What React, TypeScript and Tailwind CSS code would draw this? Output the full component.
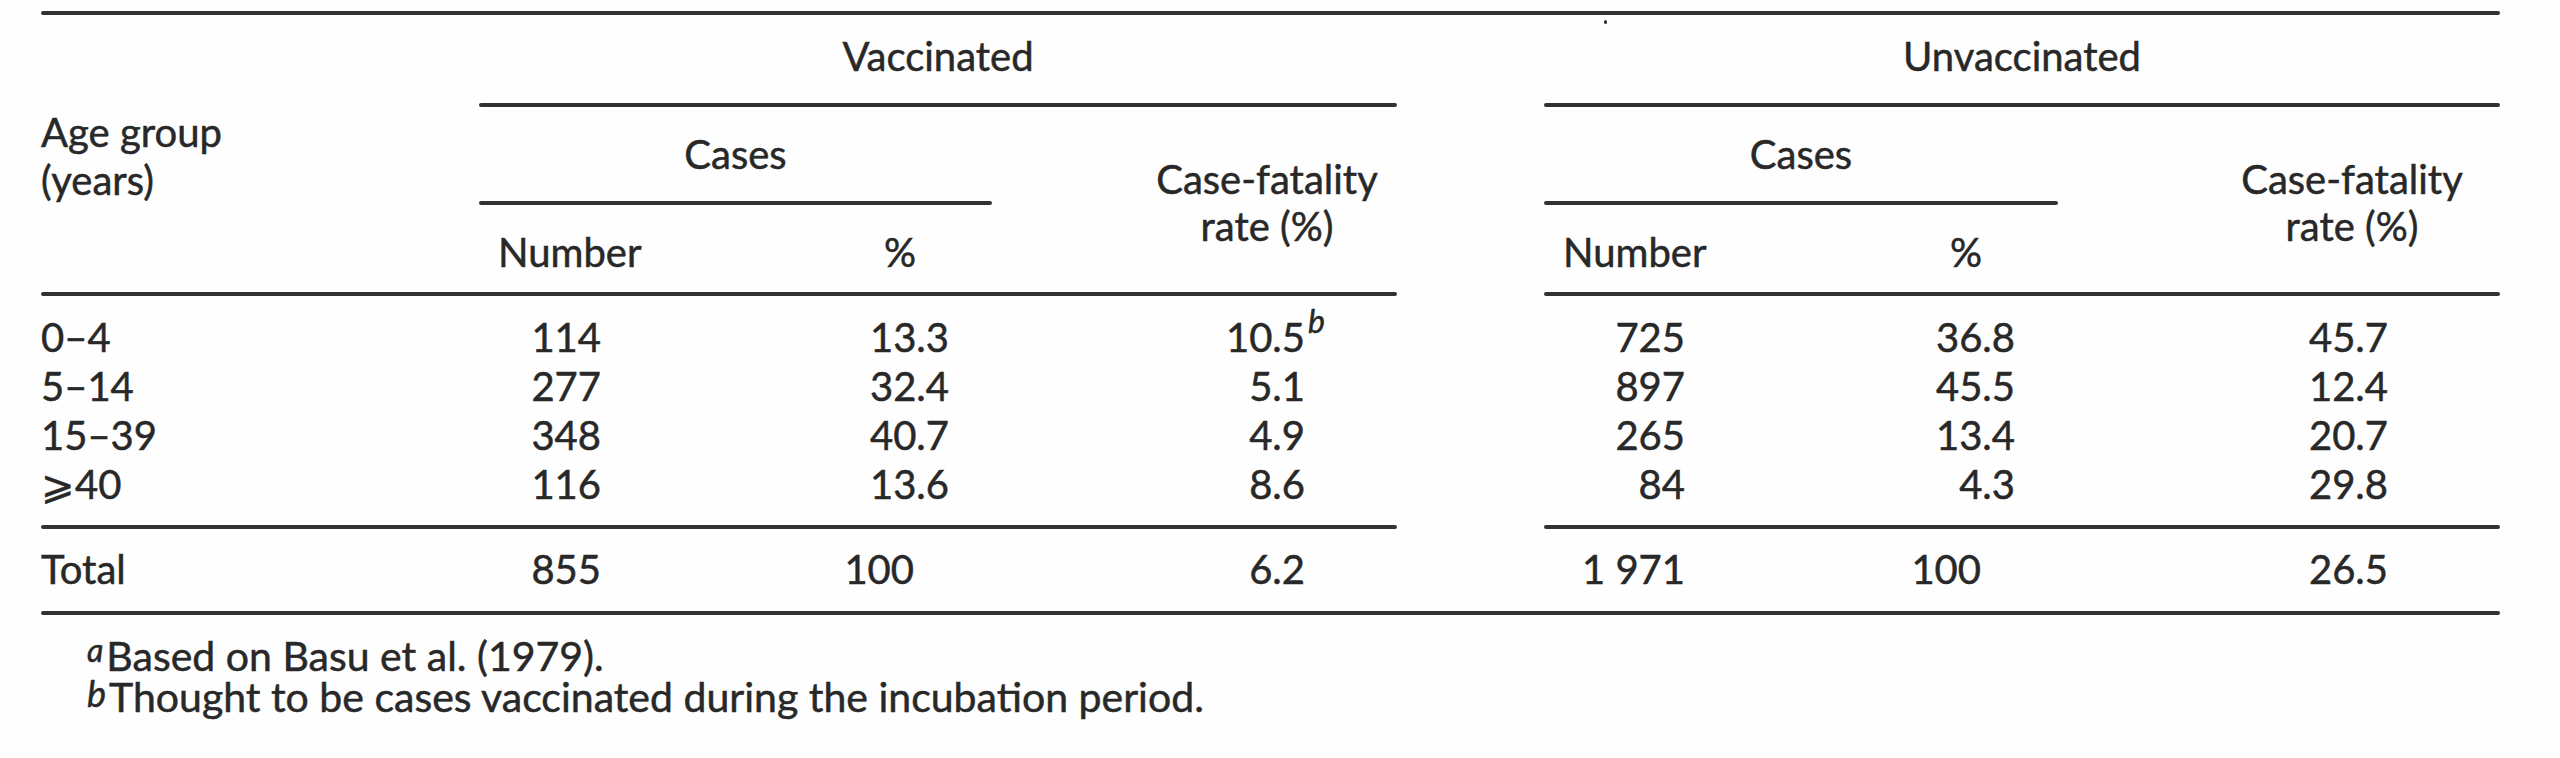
import React from 'react';

// Cases and case-fatality rates by age group, vaccinated vs unvaccinated
interface Row {
  age: string;
  vn: string;
  vp: string;
  vc: string;
  vcNote?: string;
  un: string;
  up: string;
  uc: string;
}

const ROWS: Row[] = [
  { age: '0–4', vn: '114', vp: '13.3', vc: '10.5', vcNote: 'b', un: '725', up: '36.8', uc: '45.7' },
  { age: '5–14', vn: '277', vp: '32.4', vc: '5.1', un: '897', up: '45.5', uc: '12.4' },
  { age: '15–39', vn: '348', vp: '40.7', vc: '4.9', un: '265', up: '13.4', uc: '20.7' },
  { age: '⩾40', vn: '116', vp: '13.6', vc: '8.6', un: '84', up: '4.3', uc: '29.8' },
];

const COLS = 'grid grid-cols-[438px_257px_256px_405px_147px_257px_257px_442px]';
const RULE = 'h-[4px] rounded-full bg-[#323232]';

const DataRow: React.FC<{ row: Row }> = ({ row }) => (
  <>
    <div className="col-start-1">{row.age}</div>
    <div className="col-start-2 text-right pr-[135px]">{row.vn}</div>
    <div className="col-start-3 text-right pr-[43px]">{row.vp}</div>
    <div className="col-start-4 text-right pr-[92px]">
      <span className="relative">
        {row.vc}
        {row.vcNote && (
          <span className="absolute left-full top-[-8px] pl-[3px] text-[32px] italic leading-none">{row.vcNote}</span>
        )}
      </span>
    </div>
    <div className="col-start-6 text-right pr-[116px]">{row.un}</div>
    <div className="col-start-7 text-right pr-[43px]">{row.up}</div>
    <div className="col-start-8 text-right pr-[112px]">{row.uc}</div>
  </>
);

export default function App() {
  return (
    <div className="relative w-[2560px] h-[758px] bg-[#fefefe] text-[#282828] font-['Lato','Open_Sans',sans-serif] text-[40px] [-webkit-text-stroke:0.5px_#282828] pl-[41px] pt-[11px]">
      {/* speck on the scan */}
      <span className="absolute left-[1604px] top-[20px] h-[4px] w-[3px] rounded-full bg-[#333]" />

      <div className="w-[2459px]">
        <div className={RULE} />

        {/* header */}
        <div className={`${COLS} grid-rows-[88px_4px_94px_4px_87px_4px]`}>
          <div className="col-start-1 row-start-1 row-span-5 pt-[93px] leading-[48px]">
            Age group
            <br />
            (years)
          </div>

          <div className="col-start-2 col-span-3 row-start-1 text-center pt-[17px] leading-[49px]">Vaccinated</div>
          <div className="col-start-6 col-span-3 row-start-1 text-center pt-[17px] leading-[49px]">Unvaccinated</div>

          <div className={`col-start-2 col-span-3 row-start-2 ${RULE}`} />
          <div className={`col-start-6 col-span-3 row-start-2 ${RULE}`} />

          <div className="col-start-2 col-span-2 row-start-3 text-center pt-[23px] leading-[49px]">Cases</div>
          <div className="col-start-6 col-span-2 row-start-3 text-center pt-[23px] leading-[49px]">Cases</div>

          <div className="col-start-4 row-start-3 row-span-3 pl-[145px] text-center pt-[49px] leading-[47px]">
            Case-fatality
            <br />
            rate (%)
          </div>
          <div className="col-start-8 row-start-3 row-span-3 pl-[146px] text-center pt-[49px] leading-[47px]">
            Case-fatality
            <br />
            rate (%)
          </div>

          <div className={`col-start-2 col-span-2 row-start-4 ${RULE}`} />
          <div className={`col-start-6 col-span-2 row-start-4 ${RULE}`} />

          <div className="col-start-2 row-start-5 pl-[19px] pt-[23px] leading-[49px]">Number</div>
          <div className="col-start-3 row-start-5 pl-[148px] pt-[23px] leading-[49px]">%</div>
          <div className="col-start-6 row-start-5 pl-[19px] pt-[23px] leading-[49px]">Number</div>
          <div className="col-start-7 row-start-5 pl-[149px] pt-[23px] leading-[49px]">%</div>

          <div className={`col-start-1 col-span-4 row-start-6 ${RULE}`} />
          <div className={`col-start-6 col-span-3 row-start-6 ${RULE}`} />
        </div>

        {/* body */}
        <div className={`${COLS} pt-[17px] leading-[49px]`}>
          {ROWS.map(r => (
            <DataRow key={r.age} row={r} />
          ))}
        </div>

        <div className={`${COLS} mt-[16px]`}>
          <div className={`col-start-1 col-span-4 ${RULE}`} />
          <div className={`col-start-6 col-span-3 ${RULE}`} />
        </div>

        <div className={`${COLS} mt-[16px] leading-[49px]`}>
          <div className="col-start-1">Total</div>
          <div className="col-start-2 text-right pr-[135px]">855</div>
          <div className="col-start-3 text-right pr-[78px]">100</div>
          <div className="col-start-4 text-right pr-[92px]">6.2</div>
          <div className="col-start-6 text-right pr-[116px]">1 971</div>
          <div className="col-start-7 text-right pr-[77px]">100</div>
          <div className="col-start-8 text-right pr-[112px]">26.5</div>
        </div>

        <div className={`mt-[17px] ${RULE}`} />

        {/* footnotes */}
        <div className="mt-[22px] pl-[46px] text-[41px] leading-[38px]">
          <p>
            <span className="relative top-[-9px] pr-[3px] text-[32px] italic">a</span>
            Based on Basu et al. (1979).
          </p>
          <p>
            <span className="relative top-[-5px] pr-[3px] text-[36px] italic">b</span>
            Thought to be cases vaccinated during the incubation period.
          </p>
        </div>
      </div>
    </div>
  );
}
